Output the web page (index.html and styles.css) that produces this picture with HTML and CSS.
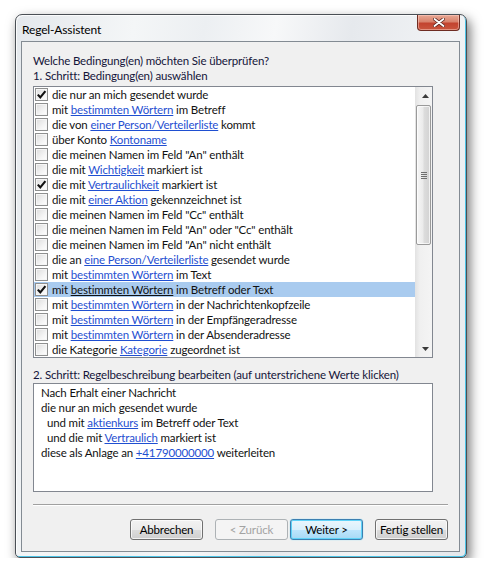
FILE: index.html
```html
<!DOCTYPE html>
<html lang="de">
<head>
<meta charset="utf-8">
<title>Regel-Assistent</title>
<link rel="stylesheet" href="styles.css">
</head>
<body>
<div class="window">
  <div class="titlebar">
    <span class="title">Regel-Assistent</span>
    <div class="close">
      <svg width="12" height="9" viewBox="0 0 12 9"><path d="M1.5 1 L10.5 8 M10.5 1 L1.5 8" stroke="#5b2620" stroke-width="3.4" stroke-linecap="round"/><path d="M1.5 1 L10.5 8 M10.5 1 L1.5 8" stroke="#fff" stroke-width="1.8" stroke-linecap="round"/></svg>
    </div>
  </div>
  <div class="client">
    <div class="label">Welche Bedingung(en) möchten Sie überprüfen?</div>
    <div class="label">1. Schritt: Bedingung(en) auswählen</div>
    <div class="listbox">
      <div class="rows">
        <div class="row"><span class="cb"><svg width="11" height="11" viewBox="0 0 11 11"><path d="M1.8 5.6 L4.3 8.3 L9.4 2.2" fill="none" stroke="#111" stroke-width="2.1"/></svg></span><span>die nur an mich gesendet wurde</span></div>
        <div class="row"><span class="cb"></span><span>mit <a>bestimmten Wörtern</a> im Betreff</span></div>
        <div class="row"><span class="cb"></span><span>die von <a>einer Person/Verteilerliste</a> kommt</span></div>
        <div class="row"><span class="cb"></span><span>über Konto <a>Kontoname</a></span></div>
        <div class="row"><span class="cb"></span><span>die meinen Namen im Feld "An" enthält</span></div>
        <div class="row"><span class="cb"></span><span>die mit <a>Wichtigkeit</a> markiert ist</span></div>
        <div class="row"><span class="cb"><svg width="11" height="11" viewBox="0 0 11 11"><path d="M1.8 5.6 L4.3 8.3 L9.4 2.2" fill="none" stroke="#111" stroke-width="2.1"/></svg></span><span>die mit <a>Vertraulichkeit</a> markiert ist</span></div>
        <div class="row"><span class="cb"></span><span>die mit <a>einer Aktion</a> gekennzeichnet ist</span></div>
        <div class="row"><span class="cb"></span><span>die meinen Namen im Feld "Cc" enthält</span></div>
        <div class="row"><span class="cb"></span><span>die meinen Namen im Feld "An" oder "Cc" enthält</span></div>
        <div class="row"><span class="cb"></span><span>die meinen Namen im Feld "An" nicht enthält</span></div>
        <div class="row"><span class="cb"></span><span>die an <a>eine Person/Verteilerliste</a> gesendet wurde</span></div>
        <div class="row"><span class="cb"></span><span>mit <a>bestimmten Wörtern</a> im Text</span></div>
        <div class="row selected"><span class="cb"><svg width="11" height="11" viewBox="0 0 11 11"><path d="M1.8 5.6 L4.3 8.3 L9.4 2.2" fill="none" stroke="#111" stroke-width="2.1"/></svg></span><span>mit <a>bestimmten Wörtern</a> im Betreff oder Text</span></div>
        <div class="row"><span class="cb"></span><span>mit <a>bestimmten Wörtern</a> in der Nachrichtenkopfzeile</span></div>
        <div class="row"><span class="cb"></span><span>mit <a>bestimmten Wörtern</a> in der Empfängeradresse</span></div>
        <div class="row"><span class="cb"></span><span>mit <a>bestimmten Wörtern</a> in der Absenderadresse</span></div>
        <div class="row"><span class="cb"></span><span>die Kategorie <a>Kategorie</a> zugeordnet ist</span></div>
      </div>
      <div class="scrollbar">
        <div class="sb-btn"><svg width="7" height="4" viewBox="0 0 7 4"><path d="M0 4 L3.5 0 L7 4 Z" fill="#3a3a3a"/></svg></div>
        <div class="sb-track">
          <div class="thumb"><span class="grip"></span></div>
        </div>
        <div class="sb-btn"><svg width="7" height="4" viewBox="0 0 7 4"><path d="M0 0 L3.5 4 L7 0 Z" fill="#3a3a3a"/></svg></div>
      </div>
    </div>
    <div class="label step2">2. Schritt: Regelbeschreibung bearbeiten (auf unterstrichene Werte klicken)</div>
    <div class="desc">
      <div>Nach Erhalt einer Nachricht</div>
      <div>die nur an mich gesendet wurde</div>
      <div class="indent">und mit <a>aktienkurs</a> im Betreff oder Text</div>
      <div class="indent">und die mit <a>Vertraulich</a> markiert ist</div>
      <div>diese als Anlage an <a>+41790000000</a> weiterleiten</div>
    </div>
    <div class="separator"></div>
    <div class="buttons">
      <button class="btn">Abbrechen</button>
      <button class="btn disabled back">&lt; Zurück</button>
      <button class="btn default next">Weiter &gt;</button>
      <button class="btn finish">Fertig stellen</button>
    </div>
  </div>
</div>
</body>
</html>
```

FILE: styles.css
```css
* { box-sizing: border-box; }

body {
  margin: 0;
  background: #ffffff;
  font-family: "Lato", "Noto Sans", sans-serif;
  font-size: 11.5px;
  letter-spacing: -0.15px;
  color: #111;
}

.window {
  margin: 14px 0 0 15px;
  width: 452px;
  height: 544px;
  border: 1px solid #4a4f55;
  border-radius: 7px 7px 5px 5px;
  background: linear-gradient(100deg, #e4e8ec 0%, #f4f6f7 22%, #eceff2 35%, #f7f8f9 48%, #e6e9ed 62%, #f1f3f5 80%, #e3e7eb 100%);
  box-shadow: inset -1px -1px 0 #4cc3e6, inset 1px 1px 0 rgba(255,255,255,0.8), 3px 5px 12px rgba(0,0,0,0.55);
  display: flex;
  flex-direction: column;
}

.titlebar {
  height: 26px;
  display: flex;
  justify-content: space-between;
  align-items: flex-start;
}

.title {
  padding: 7px 0 0 6px;
  font-size: 12px;
  color: #000;
}

.close {
  width: 43px;
  height: 16px;
  margin-right: 6px;
  border: 1px solid #6e2c22;
  border-top: none;
  border-radius: 0 0 4px 4px;
  background: linear-gradient(#e9a894 0%, #d8826c 45%, #c3432f 55%, #c9563e 100%);
  box-shadow: inset 0 0 0 1px rgba(255,210,200,0.5);
  display: flex;
  align-items: center;
  justify-content: center;
}

.client {
  margin: 0 6px 0 5px;
  height: 511px;
  border: 1px solid #838b93;
  background: #f0f0f0;
  padding: 11px 10px 0 11px;
  display: flex;
  flex-direction: column;
}

.label {
  line-height: 15px;
  color: #14143a;
  white-space: nowrap;
}

.listbox {
  margin-top: 3px;
  width: 400px;
  height: 272px;
  border: 1px solid #828790;
  background: #fff;
  display: flex;
}

.rows {
  flex: 1;
  display: flex;
  flex-direction: column;
}

.row {
  height: 15px;
  display: flex;
  align-items: center;
  padding-left: 1px;
  white-space: nowrap;
  color: #111;
}

.row.selected {
  background: #a9cbef;
}

.row.selected a {
  color: #111;
}

.cb {
  width: 13px;
  height: 13px;
  margin-right: 4px;
  border: 1px solid #8e8f8f;
  background: linear-gradient(135deg, #dcdcdc 0%, #f3f3f3 60%, #ffffff 100%);
  box-shadow: inset 0 0 0 1px #f6f6f6;
  display: flex;
  align-items: center;
  justify-content: center;
  flex: none;
}

a {
  color: #1f4fd1;
  text-decoration: underline;
}

.scrollbar {
  width: 17px;
  display: flex;
  flex-direction: column;
  background: linear-gradient(to right, #e2e2e2 0%, #f0f0f0 30%, #f4f4f4 100%);
}

.sb-btn {
  height: 17px;
  display: flex;
  align-items: center;
  justify-content: center;
  padding-left: 3px;
}

.sb-track {
  flex: 1;
  padding: 1px 1px 0 1px;
}

.thumb {
  height: 140px;
  border: 1px solid #9a9a9a;
  border-radius: 2px;
  background: linear-gradient(to right, #f6f6f6 0%, #ebebeb 45%, #dcdcdc 55%, #d2d2d2 100%);
  box-shadow: inset 0 0 0 1px rgba(255,255,255,0.7);
  display: flex;
  align-items: center;
  justify-content: center;
}

.grip {
  width: 6px;
  height: 7px;
  background: repeating-linear-gradient(#6f6f6f 0 1px, transparent 1px 2px);
}

.step2 {
  margin-top: 9px;
}

.desc {
  margin-top: 1px;
  width: 400px;
  height: 109px;
  border: 1px solid #828790;
  background: #fff;
  padding: 1px 7px;
  line-height: 15px;
  color: #111;
  white-space: nowrap;
}

.indent {
  padding-left: 6px;
}

.separator {
  margin-top: 12px;
  width: 415px;
  border-top: 1px solid #a0a0a0;
  border-bottom: 1px solid #ffffff;
}

.buttons {
  margin-top: 13px;
  width: 415px;
  display: flex;
  justify-content: flex-end;
}

.btn {
  width: 73px;
  height: 21px;
  padding: 0;
  font-family: inherit;
  font-size: 11.5px;
  font-weight: 400;
  letter-spacing: -0.15px;
  color: #000;
  border: 1px solid #707070;
  border-radius: 3px;
  background: linear-gradient(#f2f2f2 0%, #ebebeb 50%, #dddddd 51%, #cfcfcf 100%);
  box-shadow: inset 0 0 0 1px rgba(255,255,255,0.7);
}

.btn.back {
  margin-left: 12px;
}

.btn.next {
  margin-left: 2px;
}

.btn.finish {
  margin-left: 12px;
}

.btn.disabled {
  color: #a3a3a3;
  border-color: #adb2b5;
  background: #f4f4f4;
  box-shadow: none;
}

.btn.default {
  border-color: #3c7fb1;
  background: linear-gradient(#eaf6fd 0%, #d9f0fc 50%, #bee6fd 51%, #a7d9f5 100%);
  box-shadow: inset 0 0 0 1px #5fd3f8, 0 0 1px #48d2ff;
}
```
